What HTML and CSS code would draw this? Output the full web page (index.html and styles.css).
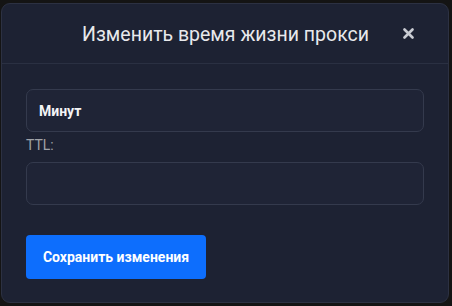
FILE: index.html
```html
<!DOCTYPE html>
<html lang="ru">
<head>
<meta charset="utf-8">
<link rel="stylesheet" href="styles.css">
</head>
<body>
<div class="modal">
  <div class="modal-header">
    <h5 class="modal-title">Изменить время жизни прокси</h5>
    <button class="close" type="button" aria-label="Закрыть">
      <svg width="11" height="11" viewBox="0 0 11 11"><path d="M1.5 1.5 L9.5 9.5 M9.5 1.5 L1.5 9.5" stroke="#c9ccd3" stroke-width="2.6" stroke-linecap="round"/></svg>
    </button>
  </div>
  <div class="modal-body">
    <div class="field select-field">Минут</div>
    <label class="label">TTL:</label>
    <div class="field"></div>
    <button class="btn-primary" type="button">Сохранить изменения</button>
  </div>
</div>
</body>
</html>
```
FILE: styles.css
```css
html, body {
  margin: 0;
  padding: 0;
  background: #141414;
  width: 452px;
  height: 306px;
  overflow: hidden;
  font-family: Roboto, "Liberation Sans", sans-serif;
}
.modal {
  margin: 3px 0 0 1px;
  width: 446px;
  height: 298px;
  background: #1d2233;
  border: 1px solid #2c3142;
  border-radius: 9px;
  box-sizing: content-box;
}
.modal-header {
  height: 59px;
  border-bottom: 1px solid #2a3042;
  display: flex;
  align-items: center;
  position: relative;
}
.modal-title {
  margin: 0;
  flex: 1;
  text-align: center;
  font-size: 19.5px;
  font-weight: 400;
  color: #e8e9ec;
  padding-top: 2px;
  padding-left: 1px;
}
.close {
  position: absolute;
  right: 34px;
  top: 24px;
  background: none;
  border: 0;
  padding: 0;
  width: 11px;
  height: 11px;
  display: flex;
}
.modal-body {
  padding: 25px 24px 0 24px;
  display: flex;
  flex-direction: column;
  align-items: flex-start;
}
.field {
  width: 396px;
  height: 41px;
  border: 1px solid #343a4d;
  border-radius: 7px;
  background: #1f2436;
  box-sizing: content-box;
}
.select-field {
  display: flex;
  align-items: center;
  font-size: 14px;
  font-weight: 700;
  color: #f4f4f6;
  text-indent: 12px;
}
.label {
  margin: 3px 0 7px;
  font-size: 14px;
  line-height: 20px;
  color: #a0a2a8;
}
.btn-primary {
  margin-top: 30px;
  width: 180px;
  height: 44px;
  background: #0d6efd;
  border: 0;
  border-radius: 4px;
  color: #ffffff;
  font-family: Roboto, "Liberation Sans", sans-serif;
  font-size: 14px;
  font-weight: 700;
  padding: 0;
}
```
